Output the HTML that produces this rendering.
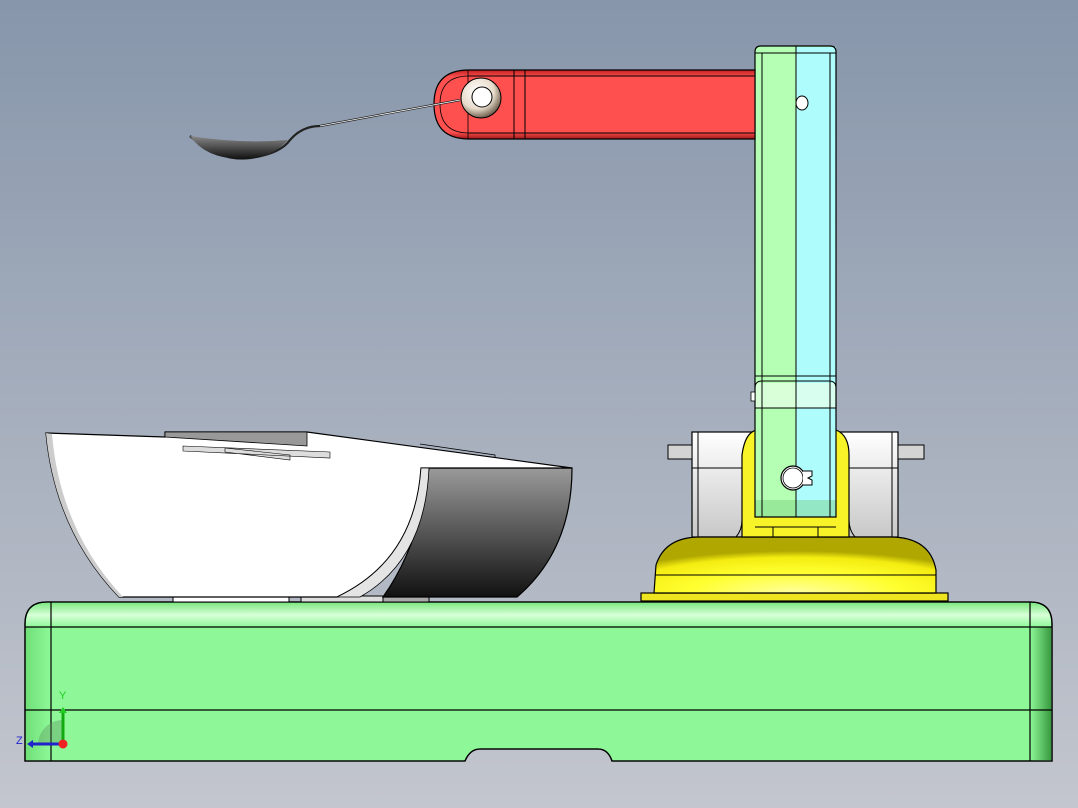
<!DOCTYPE html>
<html><head><meta charset="utf-8"><style>
html,body{margin:0;padding:0;width:1078px;height:808px;overflow:hidden}
svg{display:block}
</style></head><body>
<svg width="1078" height="808" viewBox="0 0 1078 808" xmlns="http://www.w3.org/2000/svg">
<defs>
<linearGradient id="bg" x1="0" y1="0" x2="0" y2="1"><stop offset="0" stop-color="#8796ab"/><stop offset="1" stop-color="#c3c6ce"/></linearGradient>
<linearGradient id="dark" x1="0" y1="0" x2="0" y2="1"><stop offset="0" stop-color="#9a9a9a"/><stop offset="1" stop-color="#111"/></linearGradient>
<linearGradient id="gtop" x1="0" y1="0" x2="0" y2="1"><stop offset="0" stop-color="#7fe884"/><stop offset="0.5" stop-color="#d8ffd8"/><stop offset="1" stop-color="#8ef898"/></linearGradient>
<linearGradient id="gside" x1="0" y1="0" x2="1" y2="0"><stop offset="0" stop-color="#6fe078"/><stop offset="1" stop-color="#8ef898"/></linearGradient>
<linearGradient id="gsideR" x1="0" y1="0" x2="1" y2="0"><stop offset="0" stop-color="#8ef898"/><stop offset="1" stop-color="#3a9a40"/></linearGradient>
<radialGradient id="dome" cx="0.5" cy="1" r="0.75"><stop offset="0" stop-color="#ffffa0"/><stop offset="0.5" stop-color="#ffff30"/><stop offset="0.85" stop-color="#f4ec10"/><stop offset="1" stop-color="#b0a800"/></radialGradient>
<radialGradient id="ball" cx="0.4" cy="0.35" r="0.7"><stop offset="0" stop-color="#fff"/><stop offset="0.6" stop-color="#e8dccb"/><stop offset="1" stop-color="#5a4a38"/></radialGradient>
<linearGradient id="wblk" x1="0" y1="0" x2="0" y2="1"><stop offset="0" stop-color="#fff"/><stop offset="1" stop-color="#c8c8c8"/></linearGradient>
<linearGradient id="red" x1="0" y1="0" x2="0" y2="1"><stop offset="0" stop-color="#c02020"/><stop offset="0.1" stop-color="#ff5050"/><stop offset="0.9" stop-color="#ff5050"/><stop offset="1" stop-color="#a01818"/></linearGradient>
<linearGradient id="spoon" x1="0" y1="0" x2="0" y2="1"><stop offset="0" stop-color="#888"/><stop offset="1" stop-color="#111"/></linearGradient>
</defs>
<rect width="1078" height="808" fill="url(#bg)"/>

<path d="M25 761 L25 624 Q25 602 47 602 L1030 602 Q1052 602 1052 624 L1052 761 L612 761 Q608 749 598 749 L480 749 Q470 749 465 761 Z" fill="#8ef898" stroke="#000" stroke-width="1.3"/>
<rect x="47" y="603" width="983" height="24" fill="url(#gtop)"/>
<path d="M26 627 L26 624 Q26 603 47 603 L51 603 L51 627Z" fill="url(#gtop)"/>
<path d="M1030 603 Q1051 603 1051 624 L1051 627 L1030 627Z" fill="url(#gtop)"/>
<rect x="26" y="627" width="25" height="133" fill="url(#gside)"/>
<rect x="1030" y="627" width="21" height="133" fill="url(#gsideR)"/>
<line x1="25" y1="627" x2="1052" y2="627" stroke="#000" stroke-width="1.2"/>
<line x1="25" y1="710" x2="1052" y2="710" stroke="#000" stroke-width="1.2"/>
<line x1="51" y1="602" x2="51" y2="761" stroke="#000" stroke-width="1.2"/>
<line x1="1030" y1="602" x2="1030" y2="761" stroke="#000" stroke-width="1.2"/>
<path d="M25 761 L25 624 Q25 602 47 602 L1030 602 Q1052 602 1052 624 L1052 761 L612 761 Q608 749 598 749 L480 749 Q470 749 465 761 Z" fill="none" stroke="#000" stroke-width="1.3"/>

<rect x="173" y="596" width="116" height="6" fill="#fff" stroke="#000" stroke-width="1"/>
<rect x="301" y="596" width="82" height="6" fill="#ddd" stroke="#000" stroke-width="1"/>
<rect x="383" y="596" width="46" height="6" fill="#aaa" stroke="#000" stroke-width="1"/>
<path d="M429 468 L572 468 Q572 550 517 597 L383 597 Q420 545 429 468Z" fill="url(#dark)" stroke="#000" stroke-width="1.2"/>
<path d="M46 433 L165 437 L165 432 L307 432 L572 468 L421 468 Q415 560 337 597 L119 597 Q55 530 46 433Z" fill="#fff" stroke="#000" stroke-width="1.2"/>
<path d="M46 433 Q55 530 119 597 L123 597 Q60 530 52 434Z" fill="#ccc"/>
<path d="M421 468 Q415 560 337 597 L360 597 Q425 560 429 468Z" fill="#e4e4e4" stroke="#000" stroke-width="0.8"/>
<path d="M165 432 L307 432 L307 446 L165 437Z" fill="#999" stroke="#000" stroke-width="0.8"/>
<path d="M183 446 L330 452 L330 458 L183 451Z M225 448 L290 455 L290 460 L225 452Z" fill="#ddd" stroke="#000" stroke-width="0.6"/>
<path d="M420 444 L495 455 L495 458" fill="none" stroke="#000" stroke-width="0.8"/>

<rect x="692" y="432" width="206" height="105" fill="url(#wblk)" stroke="#000" stroke-width="1.2"/>
<line x1="692" y1="468" x2="898" y2="468" stroke="#000"/>
<line x1="698" y1="432" x2="698" y2="537" stroke="#000"/>
<line x1="892" y1="432" x2="892" y2="537" stroke="#000"/>
<rect x="668" y="445" width="24" height="14" fill="#d4d4d4" stroke="#000"/>
<rect x="898" y="445" width="26" height="14" fill="#d4d4d4" stroke="#000"/>

<rect x="641" y="593" width="307" height="8" fill="#eee420" stroke="#000" stroke-width="1.2"/>
<path d="M654 593 L656 565 Q665 537 700 537 L890 537 Q930 537 936 570 L936 593Z" fill="url(#dome)" stroke="#000" stroke-width="1.2"/>
<line x1="655" y1="575" x2="936" y2="575" stroke="#000"/>
<path d="M742 537 L742 455 Q745 432 757 430 L836 430 Q849 435 849 455 L849 537 Z" fill="#f8f228" stroke="#000" stroke-width="1.2"/>
<path d="M736 537 Q742 530 742 520 M855 537 Q849 530 849 520" stroke="#000" fill="none"/>
<line x1="755" y1="527" x2="836" y2="527" stroke="#000"/>
<line x1="773" y1="527" x2="773" y2="537" stroke="#000"/>
<line x1="818" y1="527" x2="818" y2="537" stroke="#000"/>

<path d="M755 517 L755 52 Q755 46 761 46 L830 46 Q836 46 836 52 L836 517 Z" fill="#b4ffb4"/>
<rect x="796" y="47" width="40" height="470" fill="#aefcfc"/>
<rect x="755" y="500" width="81" height="17" fill="#6ec870" opacity="0.4"/>
<rect x="755" y="383" width="81" height="25" fill="#e8ffe8" opacity="0.7"/>
<path d="M755 517 L755 52 Q755 46 761 46 L830 46 Q836 46 836 52 L836 517 Z" fill="none" stroke="#000" stroke-width="1.2"/>
<line x1="762" y1="53" x2="762" y2="517" stroke="#000"/>
<line x1="796" y1="46" x2="796" y2="517" stroke="#000"/>
<line x1="830" y1="53" x2="830" y2="517" stroke="#000"/>
<line x1="755" y1="53" x2="836" y2="53" stroke="#000"/>
<path d="M755 388 Q755 381 762 381 L829 381 Q836 381 836 388" fill="none" stroke="#000"/>
<line x1="755" y1="376" x2="836" y2="376" stroke="#000"/>
<line x1="755" y1="408" x2="836" y2="408" stroke="#000"/>
<rect x="751" y="392" width="4" height="9" fill="#fff" stroke="#000" stroke-width="0.8"/>
<ellipse cx="802" cy="103" rx="6" ry="7" fill="#fff" stroke="#000"/>
<circle cx="793" cy="478" r="12" fill="#fff" stroke="#000" stroke-width="1.2"/>
<circle cx="793" cy="478" r="10" fill="#fff" stroke="#000" stroke-width="0.8"/>
<path d="M803 471 L812 471 L812 476 L808 478 L812 480 L812 485 L803 485" fill="#fff" stroke="#000"/>

<path d="M755 70 L469 70 Q434 70 434 104 Q434 139 469 139 L755 139 Z" fill="url(#red)" stroke="#000" stroke-width="1.2"/>
<path d="M469 76 Q440 76 440 104 Q440 133 469 133" fill="none" stroke="#000" stroke-width="0.8"/>
<line x1="468" y1="76" x2="755" y2="76" stroke="#000"/>
<line x1="468" y1="133" x2="755" y2="133" stroke="#000"/>
<line x1="514" y1="70" x2="514" y2="139" stroke="#000"/>
<line x1="525" y1="70" x2="525" y2="139" stroke="#000"/>
<line x1="468" y1="70" x2="468" y2="139" stroke="#000" stroke-width="0.8"/>

<path d="M190 136 Q220 162 250 158 Q280 154 290 140 Q302 126 320 126 L460 100" fill="none" stroke="#222" stroke-width="2.2"/>
<path d="M320 126 L460 100" fill="none" stroke="#fff" stroke-width="0.8"/>
<path d="M190 136 Q240 144 288 140 Q270 160 240 159 Q205 158 190 136Z" fill="url(#spoon)"/>

<circle cx="481" cy="98" r="20" fill="url(#ball)" stroke="#000" stroke-width="1"/>
<circle cx="482" cy="97" r="10" fill="#fff" stroke="#000" stroke-width="1"/>

<path d="M38 745 A25 25 0 0 1 63 720 L63 745Z" fill="#5a8a5a" opacity="0.35"/>
<line x1="63" y1="744" x2="63" y2="712" stroke="#1a1" stroke-width="3"/>
<path d="M59 713 L63 707 L67 713Z" fill="#2c2"/>
<line x1="62" y1="744" x2="32" y2="744" stroke="#22c" stroke-width="3"/>
<path d="M33 740 L27 744 L33 748Z" fill="#22c"/>
<circle cx="63" cy="744" r="4.5" fill="#e22"/>
<text x="59" y="699" font-family="Liberation Sans, sans-serif" font-size="11" fill="#2c2">Y</text>
<text x="16" y="744" font-family="Liberation Sans, sans-serif" font-size="11" fill="#22c">Z</text>
</svg>
</body></html>
